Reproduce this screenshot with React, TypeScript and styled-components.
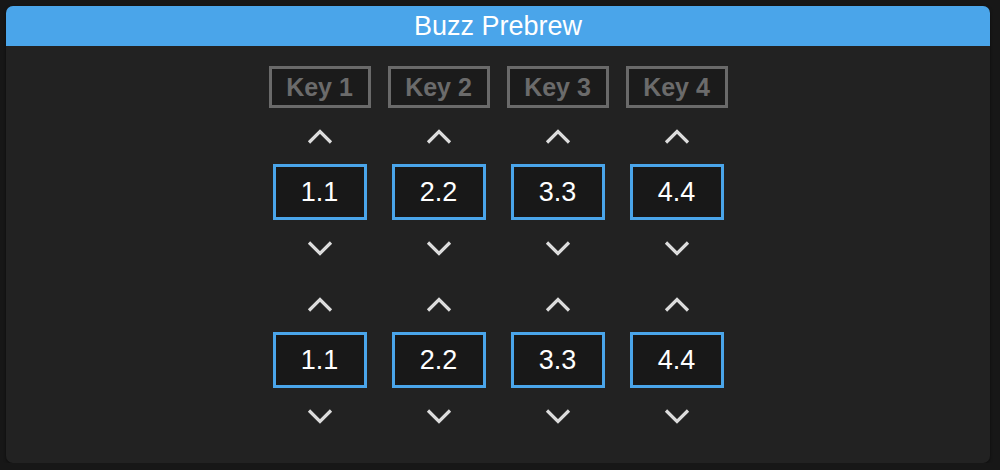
import React from 'react';
import styled, { createGlobalStyle } from 'styled-components';

const GlobalStyle = createGlobalStyle`
    html, body {
        margin: 0;
        padding: 0;
        background: #171717;
        font-family: "Liberation Sans", Arial, sans-serif;
    }
`;

const Panel = styled.div`
    margin: 6px 10px 0 6px;
    height: 457px;
    background: #222222;
    border-radius: 7px;
    overflow: hidden;
    box-shadow: 0 1px 3px rgba(0, 0, 0, 0.5);
`;

const Header = styled.div`
    height: 40px;
    background: #4aa5ea;
    color: #fff;
    font-size: 27px;
    line-height: 40px;
    text-align: center;
`;

const Grid = styled.div`
    display: flex;
    justify-content: center;
    padding-top: 20px;
`;

const Column = styled.div`
    width: 119px;
    display: flex;
    flex-direction: column;
    align-items: center;
`;

const KeyBox = styled.div`
    box-sizing: border-box;
    width: 102px;
    height: 42px;
    border: 3px solid #6a6a6a;
    background: #1b1b1b;
    color: #6b6b6b;
    font-weight: bold;
    font-size: 25px;
    display: flex;
    align-items: center;
    justify-content: center;
`;

const Arrow = styled.button`
    height: 56px;
    width: 60px;
    padding: 0;
    border: none;
    background: transparent;
    display: flex;
    align-items: center;
    justify-content: center;
    cursor: pointer;
`;

const ValueBox = styled.div`
    box-sizing: border-box;
    width: 94px;
    height: 56px;
    border: 3px solid #4aa5ea;
    background: #181818;
    color: #fff;
    font-size: 27px;
    display: flex;
    align-items: center;
    justify-content: center;
`;

const Chevron = ({ up }: { up?: boolean }) => (
    <svg width="26" height="17" viewBox="0 0 26 17">
        <path
            d={up ? 'M2 14.5 L13 3.5 L24 14.5' : 'M2 2.5 L13 13.5 L24 2.5'}
            fill="none"
            stroke="#dcdcdc"
            strokeWidth="3.2"
        />
    </svg>
);

const Stepper = ({ value }: { value: string }) => (
    <>
        <Arrow>
            <Chevron up />
        </Arrow>
        <ValueBox>{value}</ValueBox>
        <Arrow>
            <Chevron />
        </Arrow>
    </>
);

const keys = [
    { name: 'Key 1', value: '1.1' },
    { name: 'Key 2', value: '2.2' },
    { name: 'Key 3', value: '3.3' },
    { name: 'Key 4', value: '4.4' },
];

const App = () => (
    <>
        <GlobalStyle />
        <Panel>
            <Header>Buzz Prebrew</Header>
            <Grid>
                {keys.map(k => (
                    <Column key={k.name}>
                        <KeyBox>{k.name}</KeyBox>
                        <Stepper value={k.value} />
                        <Stepper value={k.value} />
                    </Column>
                ))}
            </Grid>
        </Panel>
    </>
);

export default App;
